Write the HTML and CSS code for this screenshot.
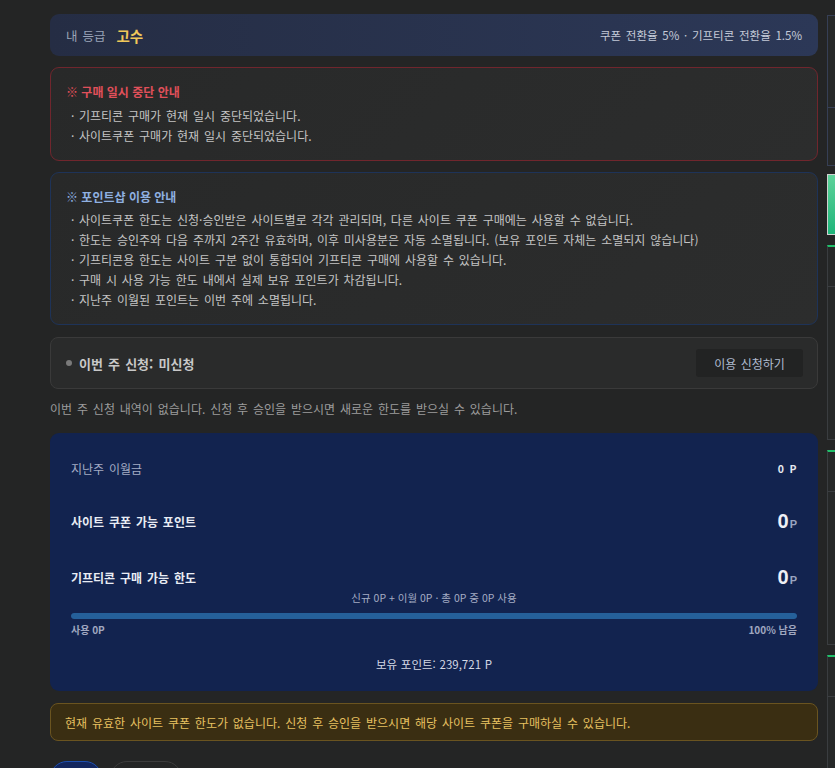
FILE: index.html
```html
<!DOCTYPE html>
<html lang="ko">
<head>
    <meta charset="UTF-8">
    <meta name="viewport" content="width=device-width, initial-scale=1.0">
    <title>포인트샵</title>
    <link rel="stylesheet" href="styles.css">
</head>
<body>
    <main class="shop">
        <!-- 등급 -->
        <div class="grade-bar">
            <div class="grade-left">
                <span class="grade-label">내 등급</span>
                <span class="grade-name">고수</span>
            </div>
            <div class="grade-rate">쿠폰 전환율 5% · 기프티콘 전환율 1.5%</div>
        </div>

        <div class="notice notice-red">
            <h3 class="notice-title">※ 구매 일시 중단 안내</h3>
            <ul class="notice-list">
                <li>기프티콘 구매가 현재 일시 중단되었습니다.</li>
                <li>사이트쿠폰 구매가 현재 일시 중단되었습니다.</li>
            </ul>
        </div>

        <div class="notice notice-blue">
            <h3 class="notice-title">※ 포인트샵 이용 안내</h3>
            <ul class="notice-list">
                <li>사이트쿠폰 한도는 신청·승인받은 사이트별로 각각 관리되며, 다른 사이트 쿠폰 구매에는 사용할 수 없습니다.</li>
                <li>한도는 승인주와 다음 주까지 2주간 유효하며, 이후 미사용분은 자동 소멸됩니다. (보유 포인트 자체는 소멸되지 않습니다)</li>
                <li>기프티콘용 한도는 사이트 구분 없이 통합되어 기프티콘 구매에 사용할 수 있습니다.</li>
                <li>구매 시 사용 가능 한도 내에서 실제 보유 포인트가 차감됩니다.</li>
                <li>지난주 이월된 포인트는 이번 주에 소멸됩니다.</li>
            </ul>
        </div>

        <div class="apply-box">
            <div class="apply-status"><span class="dot"></span>이번 주 신청: 미신청</div>
            <button class="apply-btn">이용 신청하기</button>
        </div>
        <p class="apply-note">이번 주 신청 내역이 없습니다. 신청 후 승인을 받으시면 새로운 한도를 받으실 수 있습니다.</p>

        <!-- 포인트 -->
        <div class="points">
            <div class="p-row p-carry">
                <span>지난주 이월금</span>
                <span class="p-small">0 P</span>
            </div>
            <div class="p-row p-main p-site">
                <span>사이트 쿠폰 가능 포인트</span>
                <span class="p-big">0<small>P</small></span>
            </div>
            <div class="p-row p-main p-gift">
                <span>기프티콘 구매 가능 한도</span>
                <span class="p-big">0<small>P</small></span>
            </div>
            <div class="p-sum">신규 0P + 이월 0P · 총 0P 중 0P 사용</div>
            <div class="bar"><div class="bar-fill" style="width: 100%"></div></div>
            <div class="bar-labels">
                <span>사용 0P</span>
                <span>100% 남음</span>
            </div>
            <div class="p-hold">보유 포인트: 239,721 P</div>
        </div>

        <div class="warn">현재 유효한 사이트 쿠폰 한도가 없습니다. 신청 후 승인을 받으시면 해당 사이트 쿠폰을 구매하실 수 있습니다.</div>

        <div class="tabs">
            <button class="tab active">&nbsp;</button>
            <button class="tab">&nbsp;</button>
        </div>
    </main>

    <aside class="side">
        <div class="side-box side-user">
            <div class="side-head"></div>
        </div>
        <div class="side-green"></div>
        <div class="side-box side-list">
            <div class="side-head"></div>
        </div>
        <div class="side-box side-list">
            <div class="side-head"></div>
        </div>
        <div class="side-box side-list side-last">
            <div class="side-head"></div>
        </div>
    </aside>
</body>
</html>
```

FILE: styles.css
```css
* {
    margin: 0;
    padding: 0;
    box-sizing: border-box;
}

body {
    font-family: "Noto Sans CJK KR", "Noto Sans", sans-serif;
    background: #242525;
    color: #c8c8c8;
    word-spacing: 1.5px;
    height: 768px;
    overflow: hidden;
    display: flex;
    gap: 9px;
    padding: 14px 0 0 50px;
}

.shop {
    width: 768px;
    flex-shrink: 0;
}

/* 등급 */
.grade-bar {
    height: 42px;
    border-radius: 9px;
    background: linear-gradient(90deg, #252d44, #2c3857);
    display: flex;
    align-items: center;
    justify-content: space-between;
    padding: 0 16px;
}

.grade-left {
    display: flex;
    align-items: center;
    gap: 11px;
}

.grade-label {
    font-size: 12.5px;
    color: #9aa4b8;
}

.grade-name {
    font-size: 14.5px;
    font-weight: 700;
    color: #f0c85a;
}

.grade-rate {
    font-size: 11.5px;
    color: #c4cad8;
}

/* 안내 */
.notice {
    margin-top: 11px;
    border-radius: 9px;
    padding: 14px 15px;
    background: linear-gradient(135deg, #282929, #2c2d2d);
}

.notice-red {
    border: 1px solid #70262d;
}

.notice-blue {
    border: 1px solid #1e3358;
}

.notice-title {
    font-size: 12px;
    line-height: 20px;
    font-weight: 700;
    word-spacing: 0;
    margin-bottom: 4px;
}

.notice-red .notice-title {
    color: #e0505a;
}

.notice-blue .notice-title {
    color: #8fb0e0;
    margin-bottom: 3px;
}

.notice-list {
    list-style: none;
    font-size: 12px;
    line-height: 20px;
    color: #c4c4c4;
}

.notice-list li::before {
    content: "·";
    display: inline-block;
    width: 8px;
    margin-left: 5px;
}

/* 신청 */
.apply-box {
    margin-top: 12px;
    border: 1px solid #3a3a3a;
    border-radius: 8px;
    background: #2a2b2b;
    padding: 11px 14px 11px 15px;
    display: flex;
    align-items: center;
    justify-content: space-between;
}

.apply-status {
    display: flex;
    align-items: center;
    font-size: 13px;
    font-weight: 700;
    color: #c8c8c8;
}

.dot {
    width: 6px;
    height: 6px;
    border-radius: 50%;
    background: #7a7a7a;
    margin-right: 7px;
}

.apply-btn {
    width: 107px;
    height: 28px;
    border: none;
    border-radius: 3px;
    background: #222323;
    color: #b0bcd0;
    font-family: inherit;
    font-size: 12px;
    word-spacing: 1px;
}

.apply-note {
    margin-top: 10px;
    font-size: 12px;
    line-height: 20px;
    color: #9c9c9c;
}

/* 포인트 */
.points {
    margin-top: 14px;
    border-radius: 9px;
    background: #12234f;
    padding: 24px 21px 19px;
    color: #a4acc4;
}

.p-row {
    height: 22px;
    display: flex;
    align-items: center;
    justify-content: space-between;
    font-size: 12px;
}

.p-main {
    font-weight: 700;
    color: #e8ecf4;
}

.p-site {
    margin-top: 31px;
}

.p-gift {
    margin-top: 34px;
}

.p-small {
    font-size: 10.5px;
    font-weight: 700;
    color: #e4e8f0;
    letter-spacing: 0.5px;
}

.p-big {
    font-family: "Liberation Sans", sans-serif;
    font-size: 20px;
    font-weight: 700;
    color: #eef0f6;
}

.p-big small {
    font-size: 11px;
    color: #9aa4c0;
    margin-left: 1px;
}

.p-sum {
    margin-top: 3px;
    text-align: center;
    font-size: 10.5px;
    line-height: 14px;
    word-spacing: 0;
    color: #a4acc4;
}

.bar {
    margin-top: 8px;
    height: 6px;
    border-radius: 3px;
    background: #1c3a70;
    overflow: hidden;
}

.bar-fill {
    height: 100%;
    background: #25609a;
    border-radius: 3px;
}

.bar-labels {
    margin-top: 4px;
    display: flex;
    justify-content: space-between;
    font-size: 10px;
    line-height: 14px;
    font-weight: 700;
    word-spacing: 0;
    color: #a0a8c0;
}

.p-hold {
    margin-top: 19px;
    text-align: center;
    font-size: 11.5px;
    line-height: 16px;
    word-spacing: 0.5px;
    color: #d4d8e4;
}

/* 경고 */
.warn {
    margin-top: 12px;
    height: 38px;
    border: 1px solid #6a5420;
    border-radius: 8px;
    background: #3a2e12;
    padding: 0 14px;
    display: flex;
    align-items: center;
    font-size: 12px;
    color: #e6c060;
}

.tabs {
    margin-top: 20px;
    display: flex;
    gap: 8px;
}

.tab {
    height: 34px;
    width: 72px;
    border-radius: 17px;
    border: 1px solid #3c3c3c;
    background: #242525;
}

.tab.active {
    width: 52px;
    border-color: #1d4fb0;
    background: #13265e;
}

/* 사이드 */
.side {
    width: 220px;
    flex-shrink: 0;
    padding-top: 1px;
}

.side-box {
    border: 1px solid #3a3d40;
    background: #262828;
}

.side-head {
    border-bottom: 1px solid #3a3d40;
}

.side-user {
    height: 151px;
    border-color: #363f55;
}

.side-user .side-head {
    height: 92px;
    border-color: #363f55;
}

.side-green {
    margin-top: 8px;
    height: 61px;
    border: 1px solid #d0d0d0;
    background: linear-gradient(180deg, #5ed29a, #1fb57a);
}

.side-list {
    margin-top: 10px;
    height: 195px;
    border-top: 2px solid #1fc06a;
}

.side-list .side-head {
    height: 40px;
}

.side-last {
    height: 200px;
}
```
